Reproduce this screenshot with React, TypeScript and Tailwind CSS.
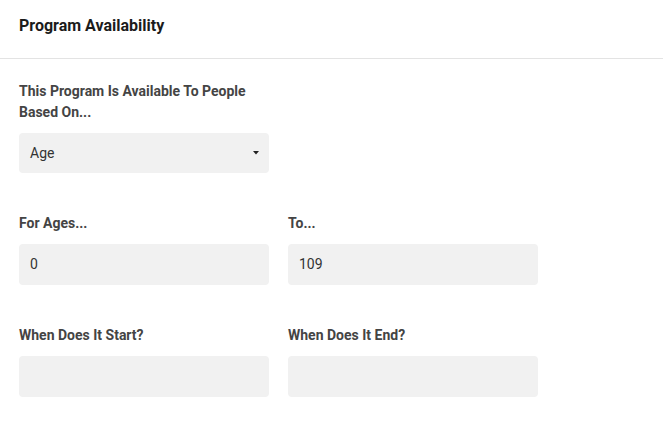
export default function App() {
  return (
    <div className="w-[663px] h-[423px] bg-white overflow-hidden" style={{ fontFamily: "Roboto, 'Liberation Sans', sans-serif" }}>
      {/* Header */}
      <div className="h-[59px] border-b border-[#e3e3e3] px-[19px] pt-[16px]">
        <h1 className="text-[16px] leading-[20px] font-bold text-[#1b1b1b]">Program Availability</h1>
      </div>

      <div className="px-[19px] pt-[22px]">
        {/* Based on */}
        <div className="w-[250px]">
          <label className="block text-[14px] leading-[21px] font-bold text-[#444]">
            This Program Is Available To People Based On...
          </label>
          <div className="mt-[10px] h-10 rounded bg-[#f1f1f1] flex items-center justify-between pl-[11px] pr-[10px]">
            <span className="text-[14px] text-[#333]">Age</span>
            <svg width="6" height="4" viewBox="0 0 6 4">
              <path d="M0 0 L6 0 L3 3.5 Z" fill="#222" />
            </svg>
          </div>
        </div>

        {/* Ages */}
        <div className="mt-10 grid grid-cols-[250px_250px] gap-x-[19px]">
          <div>
            <label className="block text-[14px] leading-[21px] font-bold text-[#444]">For Ages...</label>
            <div className="mt-[10px] h-[41px] rounded bg-[#f1f1f1] flex items-center px-[11px]">
              <span className="text-[14px] text-[#333]">0</span>
            </div>
          </div>
          <div>
            <label className="block text-[14px] leading-[21px] font-bold text-[#444]">To...</label>
            <div className="mt-[10px] h-[41px] rounded bg-[#f1f1f1] flex items-center px-[11px]">
              <span className="text-[14px] text-[#333]">109</span>
            </div>
          </div>
        </div>

        {/* Dates */}
        <div className="mt-10 grid grid-cols-[250px_250px] gap-x-[19px]">
          <div>
            <label className="block text-[14px] leading-[21px] font-bold text-[#444]">When Does It Start?</label>
            <div className="mt-[10px] h-[41px] rounded bg-[#f1f1f1]" />
          </div>
          <div>
            <label className="block text-[14px] leading-[21px] font-bold text-[#444]">When Does It End?</label>
            <div className="mt-[10px] h-[41px] rounded bg-[#f1f1f1]" />
          </div>
        </div>
      </div>
    </div>
  );
}
